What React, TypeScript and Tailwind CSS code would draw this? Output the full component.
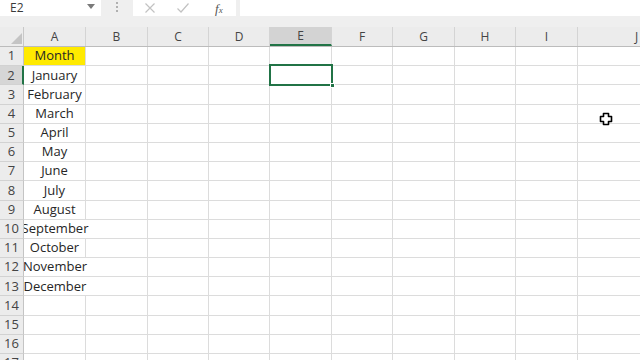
import React from "react";

const cols: { id: string; w: string }[] = [
  { id: "A", w: "w-[62px]" },
  { id: "B", w: "w-[62px]" },
  { id: "C", w: "w-[61px]" },
  { id: "D", w: "w-[61px]" },
  { id: "E", w: "w-[62px]" },
  { id: "F", w: "w-[61px]" },
  { id: "G", w: "w-[62px]" },
  { id: "H", w: "w-[61px]" },
  { id: "I", w: "w-[62px]" },
  { id: "J", w: "w-[118px]" },
];

const months: Record<number, string> = {
  2: "January",
  3: "February",
  4: "March",
  5: "April",
  6: "May",
  7: "June",
  8: "July",
  9: "August",
  10: "September",
  11: "October",
  12: "November",
  13: "December",
};

const noRightBorderA = new Set([10, 12, 13]);

function Cursor() {
  return (
    <svg width="14" height="14" viewBox="0 0 14 14" className="absolute left-[599px] top-[112px] z-30">
      <path
        d="M4.5 1.5 H9.5 V4.5 H12.5 V9.5 H9.5 V12.5 H4.5 V9.5 H1.5 V4.5 H4.5 Z"
        fill="white"
        stroke="black"
        strokeWidth="1.6"
        strokeLinejoin="round"
      />
    </svg>
  );
}

export default function App() {
  const rows = Array.from({ length: 17 }, (_, i) => i + 1);
  return (
    <div
      className="relative w-[640px] h-[360px] overflow-hidden bg-white"
      style={{ fontFamily: "'Open Sans', 'Noto Sans', sans-serif" }}
    >
      {/* formula bar */}
      <div className="flex h-[17px] bg-[#efefef]">
        <div className="w-[101px] h-[16px] bg-white flex items-center justify-between pl-[10px] pr-[6px]">
          <span className="text-[12px] text-[#3a3a3a] leading-none">E2</span>
          <svg width="8" height="5" viewBox="0 0 8 5" className="mb-[4px]">
            <path d="M0 0 L8 0 L4 5 Z" fill="#7a7a7a" />
          </svg>
        </div>
        <div className="w-[32px] flex flex-col items-center justify-start gap-[2px] pt-[2px]">
          <span className="w-[2px] h-[2px] bg-[#b0b0b0]" />
          <span className="w-[2px] h-[2px] bg-[#b0b0b0]" />
          <span className="w-[2px] h-[2px] bg-[#b0b0b0]" />
        </div>
        <div className="w-[103px] h-[16px] bg-white flex items-center">
          <svg width="12" height="12" viewBox="0 0 12 12" className="ml-[11px]">
            <path d="M1.5 1.5 L10.5 10.5 M10.5 1.5 L1.5 10.5" stroke="#c2c2c2" strokeWidth="1.2" />
          </svg>
          <svg width="14" height="12" viewBox="0 0 14 12" className="ml-[20px]">
            <path d="M1.5 6.5 L5 10 L12.5 1.5" stroke="#c2c2c2" strokeWidth="1.2" fill="none" />
          </svg>
          <span
            className="ml-[25px] text-[13px] italic text-[#555] leading-none"
            style={{ fontFamily: "'Liberation Serif', serif" }}
          >
            f<span className="text-[9px]">x</span>
          </span>
        </div>
        <div className="w-[4px]" />
        <div className="flex-1 h-[16px] bg-white" />
      </div>
      <div className="h-[10px] bg-[#efefef]" />

      {/* column headers */}
      <div className="flex h-[20px] bg-[#ececec] border-b border-[#bcbcbc]">
        <div className="relative w-[24px] shrink-0 border-r border-[#c8c8c8]">
          <svg width="11" height="11" viewBox="0 0 11 11" className="absolute right-[1px] bottom-[2px]">
            <path d="M11 0 L11 11 L0 11 Z" fill="#c4c4c4" />
          </svg>
        </div>
        {cols.map((c) => (
          <div
            key={c.id}
            className={`${c.w} shrink-0 flex items-center justify-center text-[12px] text-[#444] border-r border-[#d4d4d4] ${
              c.id === "E" ? "bg-[#d3d3d3] border-b-2 border-b-[#217346]" : ""
            }`}
          >
            {c.id}
          </div>
        ))}
      </div>

      {/* rows */}
      {rows.map((r) => (
        <div key={r} className="flex h-[19.2px]">
          <div
            className={`relative z-10 w-[24px] shrink-0 flex items-center justify-center text-[13px] text-[#444] border-b border-[#d2d2d2] ${
              r === 2
                ? "bg-[#d6d6d6] border-r-2 border-r-[#217346]"
                : "bg-[#ececec] border-r border-r-[#c4c4c4]"
            }`}
          >
            {r}
          </div>
          {cols.map((c) => {
            const isA = c.id === "A";
            const noRight = isA && noRightBorderA.has(r);
            const isMonthHeader = isA && r === 1;
            return (
              <div
                key={c.id}
                className={`relative ${c.w} shrink-0 flex items-center justify-center border-b border-[#dcdcdc] ${
                  noRight ? "border-r-0" : "border-r border-r-[#dcdcdc]"
                } ${isMonthHeader ? "bg-[#ffea00]" : ""} ${isA ? "z-0" : ""}`}
              >
                {isA && r === 1 && (
                  <span className="text-[13px] text-[#262626] whitespace-nowrap">Month</span>
                )}
                {isA && months[r] && (
                  <span className="text-[13px] text-[#262626] whitespace-nowrap">{months[r]}</span>
                )}
                {c.id === "E" && r === 2 && (
                  <div className="absolute left-[-1px] top-[-2px] w-[64px] h-[22px] border-2 border-[#217346] z-20">
                    <div className="absolute right-[-4px] bottom-[-4px] w-[5px] h-[5px] bg-[#217346] border border-white" />
                  </div>
                )}
              </div>
            );
          })}
        </div>
      ))}

      <Cursor />
    </div>
  );
}
